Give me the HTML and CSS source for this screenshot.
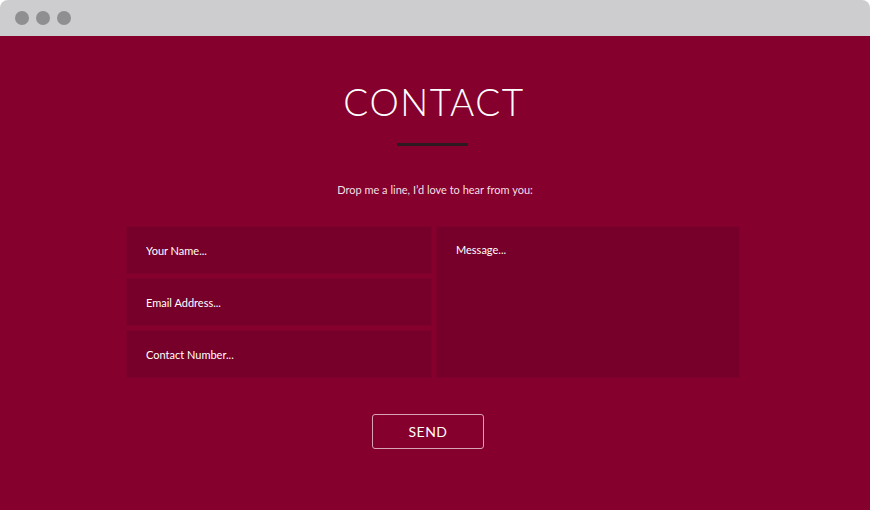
FILE: index.html
```html
<!DOCTYPE html>
<html lang="en">
<head>
    <meta charset="UTF-8">
    <meta name="viewport" content="width=device-width, initial-scale=1.0">
    <title>Contact</title>
    <link rel="stylesheet" href="styles.css">
</head>
<body>
    <div class="window">
        <div class="titlebar">
            <span class="dot"></span>
            <span class="dot"></span>
            <span class="dot"></span>
        </div>
        <div class="page">
            <h1>CONTACT</h1>
            <div class="divider"></div>
            <p class="intro">Drop me a line, I&rsquo;d love to hear from you:</p>

            <form class="contact-form">
                <div class="fields">
                    <input type="text" placeholder="Your Name...">
                    <input type="email" placeholder="Email Address...">
                    <input type="tel" placeholder="Contact Number...">
                </div>
                <textarea placeholder="Message..."></textarea>
            </form>

            <button class="send" type="button">SEND</button>
        </div>
    </div>
</body>
</html>
```

FILE: styles.css
```css
body {
    margin: 0;
    padding: 0;
    background-color: #fff;
    font-family: Lato, "Open Sans", sans-serif;
}

.window {
    width: 870px;
    height: 510px;
    display: flex;
    flex-direction: column;
    border-radius: 8px 8px 0 0;
    overflow: hidden;
}

.titlebar {
    height: 36px;
    background-color: #cdcdcf;
    display: flex;
    align-items: center;
    gap: 7px;
    padding-left: 15px;
    flex-shrink: 0;
}

.dot {
    width: 14px;
    height: 14px;
    border-radius: 50%;
    background-color: #8f8f91;
}

.page {
    flex: 1;
    background-color: #85002d;
    display: flex;
    flex-direction: column;
    align-items: center;
    color: #fff;
}

h1 {
    margin: 47px 0 0;
    font-size: 37px;
    font-weight: 300;
    letter-spacing: 1.5px;
    line-height: 38px;
    padding-right: 2px;
}

.divider {
    width: 71px;
    height: 3px;
    background-color: #2b1a20;
    margin-top: 22px;
    margin-right: 6px;
}

.intro {
    font-size: 11px;
    margin: 37px 0 0;
    color: #f3dfe5;
}

.contact-form {
    display: flex;
    gap: 4px;
    margin-top: 30px;
    margin-right: 4px;
    width: 614px;
}

.fields {
    display: flex;
    flex-direction: column;
    gap: 4px;
    width: 306px;
}

.contact-form input,
.contact-form textarea {
    box-sizing: border-box;
    background-color: #76002a;
    border: 1px solid #7e002c;
    color: #fff;
    font-family: inherit;
    font-size: 11px;
    outline: none;
}

.contact-form input {
    height: 48px;
    padding: 0 19px;
}

.contact-form textarea {
    flex: 1;
    height: 152px;
    padding: 16px 19px;
    resize: none;
}

.contact-form ::placeholder {
    color: #fff;
    opacity: 1;
}

.send {
    margin-top: 36px;
    margin-right: 14px;
    width: 112px;
    height: 35px;
    background: transparent;
    border: 1px solid #d8a3b4;
    border-radius: 3px;
    color: #fff;
    font-family: inherit;
    font-size: 14px;
    letter-spacing: 0.5px;
    cursor: pointer;
}
```
